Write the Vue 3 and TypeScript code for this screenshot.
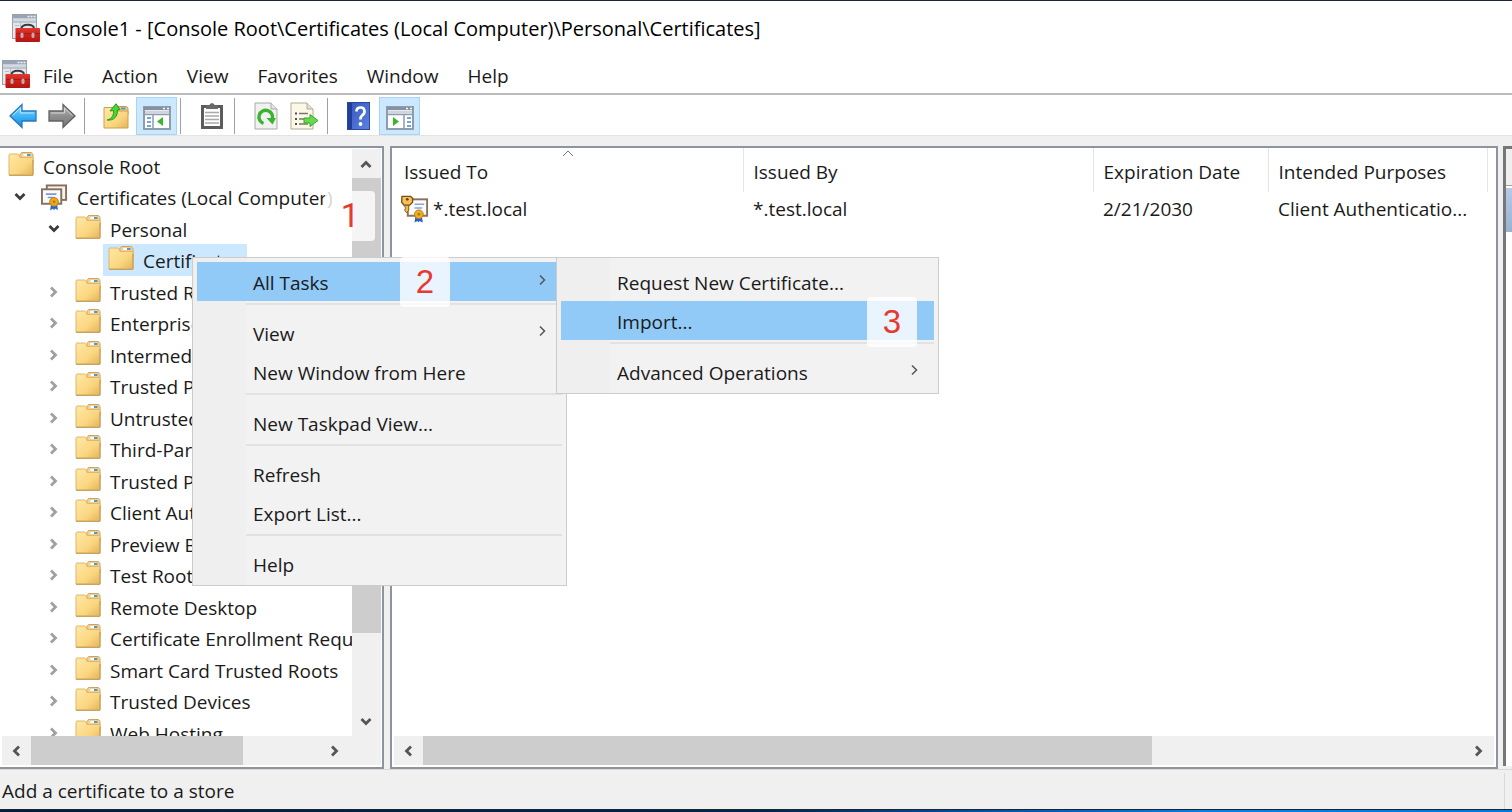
<script setup lang="ts">
interface TreeNode {
  label: string
  level: number
  state?: 'open' | 'closed'
  icon?: string
  selected?: boolean
}

interface MenuEntry {
  label?: string
  separator?: boolean
  submenu?: boolean
  active?: boolean
}

const menus = ['File', 'Action', 'View', 'Favorites', 'Window', 'Help']

const closed = (label: string): TreeNode => ({ label, level: 2, state: 'closed' })

const tree: TreeNode[] = [
  { label: 'Console Root', level: 0 },
  { label: 'Certificates (Local Computer)', level: 1, state: 'open', icon: 'i-certs' },
  { label: 'Personal', level: 2, state: 'open' },
  { label: 'Certificates', level: 3, selected: true },
  closed('Trusted Root Certification Authorities'),
  closed('Enterprise Trust'),
  closed('Intermediate Certification Authorities'),
  closed('Trusted Publishers'),
  closed('Untrusted Certificates'),
  closed('Third-Party Root Certification Authorities'),
  closed('Trusted People'),
  closed('Client Authentication Issuers'),
  closed('Preview Build Roots'),
  closed('Test Roots'),
  closed('Remote Desktop'),
  closed('Certificate Enrollment Requests'),
  closed('Smart Card Trusted Roots'),
  closed('Trusted Devices'),
  closed('Web Hosting'),
]

const columns = ['Issued To', 'Issued By', 'Expiration Date', 'Intended Purposes']

const contextMenu: MenuEntry[] = [
  { label: 'All Tasks', submenu: true, active: true },
  { separator: true },
  { label: 'View', submenu: true },
  { label: 'New Window from Here' },
  { separator: true },
  { label: 'New Taskpad View...' },
  { separator: true },
  { label: 'Refresh' },
  { label: 'Export List...' },
  { separator: true },
  { label: 'Help' },
]

const taskMenu: MenuEntry[] = [
  { label: 'Request New Certificate...' },
  { label: 'Import...', active: true },
  { separator: true },
  { label: 'Advanced Operations', submenu: true },
]

const popups = [
  { name: 'context', entries: contextMenu },
  { name: 'tasks', entries: taskMenu },
]
</script>

<template>
  <div class="window">
    <svg class="defs" width="0" height="0" aria-hidden="true">
      <defs>
        <linearGradient id="g-folder" x1="0" y1="0" x2="1" y2="1">
          <stop offset="0" stop-color="#ffe9a6" />
          <stop offset="0.6" stop-color="#fbd680" />
          <stop offset="1" stop-color="#e3b45c" />
        </linearGradient>
        <linearGradient id="g-blue" x1="0" y1="0" x2="0" y2="1">
          <stop offset="0" stop-color="#8fdcff" />
          <stop offset="0.5" stop-color="#3fb4f5" />
          <stop offset="1" stop-color="#1583dc" />
        </linearGradient>
        <linearGradient id="g-gray" x1="0" y1="0" x2="0" y2="1">
          <stop offset="0" stop-color="#bdbdbd" />
          <stop offset="0.5" stop-color="#8f8f8f" />
          <stop offset="1" stop-color="#747474" />
        </linearGradient>
        <linearGradient id="g-red" x1="0" y1="0" x2="0" y2="1">
          <stop offset="0" stop-color="#dd3a31" />
          <stop offset="0.45" stop-color="#d2211b" />
          <stop offset="1" stop-color="#b31511" />
        </linearGradient>
        <linearGradient id="g-help" x1="0" y1="0" x2="1" y2="1">
          <stop offset="0" stop-color="#3554b8" />
          <stop offset="1" stop-color="#5b83e2" />
        </linearGradient>
      </defs>
      <symbol id="i-console" viewBox="0 0 28 28">
        <rect x="0.5" y="0.5" width="24" height="24" fill="#e3e7ec" stroke="#98a1ac" />
        <rect x="1" y="1" width="23" height="3.500" fill="#98a4b4" />
        <path d="M15.500 2.500h2M18.500 2.500h2M21.500 2.500h2" stroke="#eef2f7" stroke-width="1.500" />
        <rect x="1" y="4.500" width="23" height="3" fill="#d3d8df" />
        <path d="M1 8h23" stroke="#98a4b4" />
        <path d="M3 11.500h4M3 15h2M8.500 8.500v6" stroke="#b2bbc6" />
        <path d="M9.500 14.500C10 9.500 21.500 9.500 22 14.500" fill="none" stroke="#3c3c3c" stroke-width="2" />
        <rect x="3.500" y="14" width="24.500" height="14" rx="1" fill="url(#g-red)" />
        <path d="M4 19.500h24" stroke="#a91a16" />
        <rect x="8.500" y="18.500" width="3" height="5.500" rx="1.500" fill="#b9b0ae" />
        <rect x="19.500" y="18.500" width="3" height="5.500" rx="1.500" fill="#b9b0ae" />
      </symbol>
      <symbol id="i-folder" viewBox="0 0 26 24">
        <path d="M12 4.500V2.500L13.500 0.500H23.500L25 2.500V12H12z" fill="#f0d296" stroke="#cfa45e" />
        <rect x="15.500" y="2" width="3.500" height="2" fill="#fff" />
        <rect x="19" y="2" width="3.500" height="2" fill="#4a9ad8" />
        <path d="M1 3.500Q1 2 2 2H9.500Q11 2 11.500 4L12 5.500H25V23H1z" fill="url(#g-folder)" stroke="#dfb66c" />
        <path d="M1 23.300H25V8" fill="none" stroke="#bd9650" />
      </symbol>
      <symbol id="i-certs" viewBox="0 0 28 27">
        <rect x="6" y="1" width="20" height="15" fill="#f6f3f0" stroke="#86705d" stroke-width="2" />
        <rect x="1" y="5" width="20" height="15" fill="#fbfbff" stroke="#86705d" stroke-width="2" />
        <path d="M5 10h11M7 13.500h6" stroke="#7c97d8" stroke-width="1.600" />
        <path d="M10.500 19l-1 8 3-2 1 2 1-2 3 1.500-1-8z" fill="#1f63d6" />
        <circle cx="13.500" cy="18" r="4.500" fill="#eba91c" stroke="#bd7a0e" />
        <circle cx="13.500" cy="18" r="1.500" fill="#b97a12" />
      </symbol>
      <symbol id="i-keycert" viewBox="0 0 30 28">
        <rect x="7" y="4" width="20" height="17" fill="#fbfbff" stroke="#8a7258" stroke-width="2" />
        <path d="M14 9h10M14 13h8" stroke="#8aa3dd" stroke-width="1.500" />
        <path d="M4 7h4v8l-2 3-2-2v-2l1-1-1-1z" fill="#f1bd4e" stroke="#8f5d11" />
        <path d="M1 1h9l2 2v4l-3 3H3L0.700 7z" fill="#f3c25a" stroke="#7c4e12" stroke-width="1.400" />
        <circle cx="6.500" cy="4" r="1.400" fill="#6d4410" />
        <path d="M15 21l-1 7 3-1.500 1 1.500 1-1.500 3.500 1.500-1-7z" fill="#1f63d6" />
        <circle cx="18.500" cy="19.500" r="4.500" fill="#eeb01f" stroke="#bd7a0e" />
        <circle cx="18.500" cy="19.500" r="1.500" fill="#b97a12" />
      </symbol>
      <symbol id="i-back" viewBox="0 0 28 26">
        <path d="M1 13L13 1.500V8H27V18H13V24.500z" fill="url(#g-blue)" stroke="#2878bd" stroke-width="1.300" />
        <path d="M3.500 12.500L11.500 5V10H25" fill="none" stroke="#b5e8ff" />
      </symbol>
      <symbol id="i-forward" viewBox="0 0 28 26">
        <path d="M27 13L15 1.500V8H1V18H15V24.500z" fill="url(#g-gray)" stroke="#626262" stroke-width="1.300" />
        <path d="M3 10H16.500V5L24.500 12.500" fill="none" stroke="#d5d5d5" />
      </symbol>
      <symbol id="i-up" viewBox="0 0 26 26">
        <path d="M13 5V3.500H23.500L25 5V12H13z" fill="#edc982" stroke="#c99b50" />
        <rect x="18" y="4.500" width="4.500" height="2" fill="#4a9ad8" />
        <path d="M1 4.500H11L13 8H25V25H1z" fill="url(#g-folder)" stroke="#cda04e" />
        <path d="M4 17C9 16 11 12 10.500 7.500L7 8 13 0.700 17 6.500 14.300 7C15 13 11 18 4 17z" fill="#4bd436" stroke="#259b1c" />
      </symbol>
      <symbol id="i-pane-left" viewBox="0 0 28 24">
        <rect x="1" y="1" width="26" height="22" fill="#fff" stroke="#8f9cac" stroke-width="2" />
        <path d="M1 2.500h26" stroke="#8392a5" stroke-width="3" />
        <path d="M20 2.500h2M24 2.500h2" stroke="#fff" stroke-width="1.500" />
        <path d="M2 6h24" stroke="#cfd5dd" stroke-width="3" />
        <path d="M1 8.500h26M10 9v14" stroke="#8f9cac" stroke-width="1.500" />
        <path d="M4 12h4M4 16h4M4 20h4" stroke="#4587d2" stroke-width="1.600" />
        <path d="M14 15.500L20 11V20z" fill="#35b82c" />
      </symbol>
      <symbol id="i-pane-right" viewBox="0 0 28 24">
        <rect x="1" y="1" width="26" height="22" fill="#fff" stroke="#8f9cac" stroke-width="2" />
        <path d="M1 2.500h26" stroke="#8392a5" stroke-width="3" />
        <path d="M20 2.500h2M24 2.500h2" stroke="#fff" stroke-width="1.500" />
        <path d="M2 6h24" stroke="#cfd5dd" stroke-width="3" />
        <path d="M1 8.500h26M18 9v14" stroke="#8f9cac" stroke-width="1.500" />
        <path d="M21 12h4M21 16h4M21 20h4" stroke="#4587d2" stroke-width="1.600" />
        <path d="M13 15.500L7 11V20z" fill="#35b82c" />
      </symbol>
      <symbol id="i-clipboard" viewBox="0 0 22 26">
        <rect x="1.500" y="3.500" width="19" height="21" fill="#fff" stroke="#5c5c5c" stroke-width="3" />
        <path d="M5 6V2.500H8Q9 0 11 0T14 2.500H17V6z" fill="#6a6a6a" />
        <path d="M4 9.500h14M4 13h14M4 16.500h14M4 20h14" stroke="#a9a9a9" stroke-width="1.500" />
      </symbol>
      <symbol id="i-refresh" viewBox="0 0 24 28">
        <path d="M1 1H17L23 7V27H1z" fill="#f1f2f0" stroke="#a9a9a9" />
        <path d="M17 1V7H23" fill="#e3e3e3" stroke="#a9a9a9" />
        <path d="M9.500 21.500A6.800 6.800 0 1 1 18.300 17" fill="none" stroke="#38b42e" stroke-width="3.400" />
        <path d="M12.500 16H22L18.500 22.500z" fill="#38b42e" />
      </symbol>
      <symbol id="i-export" viewBox="0 0 29 28">
        <path d="M1 1H17L23 7V27H1z" fill="#fbf8e6" stroke="#b3aa97" />
        <path d="M17 1V7H23" fill="#e6e1d3" stroke="#aaa" />
        <path d="M5 11.500h2M5 17h2M5 22h2" stroke="#4b4b6a" stroke-width="2" />
        <path d="M9 11.500h9M9 17h6M9 22h9" stroke="#777" stroke-width="1.500" />
        <path d="M14 16H20V12.500L28 18.500 20 24.500V21H14z" fill="#67d94f" stroke="#38a92f" />
      </symbol>
      <symbol id="i-help" viewBox="0 0 23 28">
        <rect x="0.500" y="0.500" width="22" height="27" fill="url(#g-help)" stroke="#2846a3" />
        <rect x="1" y="1" width="4" height="26" fill="#203d9b" />
        <path d="M9.500 9.500Q9.500 5.500 13.500 5.500T17.500 9.500Q17.500 12 15 13.500Q13.500 14.700 13.500 17.500" fill="none" stroke="#fff" stroke-width="2.700" />
        <circle cx="13.500" cy="22" r="1.900" fill="#fff" />
      </symbol>
      <symbol id="i-chevron" viewBox="0 0 14 14">
        <path d="M4 2.500L8.500 7L4 11.500" fill="none" stroke="currentColor" stroke-width="2.800" />
      </symbol>
      <symbol id="i-thin" viewBox="0 0 14 14">
        <path d="M5 2.500L9.500 7L5 11.500" fill="none" stroke="currentColor" stroke-width="1.500" />
      </symbol>
    </svg>

    <header class="title-bar">
      <svg class="app-icon"><use href="#i-console" /></svg>
      <h1 class="title">Console1 - [Console Root\Certificates (Local Computer)\Personal\Certificates]</h1>
    </header>

    <nav class="menu-bar">
      <svg class="app-icon"><use href="#i-console" /></svg>
      <button v-for="m in menus" :key="m" type="button" class="menu-title">{{ m }}</button>
    </nav>

    <div class="toolbar">
      <button type="button" class="tool" aria-label="Back"><svg width="28" height="26"><use href="#i-back" /></svg></button>
      <button type="button" class="tool" aria-label="Forward"><svg width="28" height="26"><use href="#i-forward" /></svg></button>
      <span class="divider"></span>
      <button type="button" class="tool" aria-label="Up one level"><svg width="26" height="26"><use href="#i-up" /></svg></button>
      <button type="button" class="tool pressed" aria-label="Console tree"><svg width="28" height="24"><use href="#i-pane-left" /></svg></button>
      <span class="divider"></span>
      <button type="button" class="tool" aria-label="Paste"><svg width="22" height="26"><use href="#i-clipboard" /></svg></button>
      <span class="divider"></span>
      <button type="button" class="tool" aria-label="Refresh"><svg width="24" height="28"><use href="#i-refresh" /></svg></button>
      <button type="button" class="tool" aria-label="Export list"><svg width="29" height="28"><use href="#i-export" /></svg></button>
      <span class="divider"></span>
      <button type="button" class="tool" aria-label="Help"><svg width="23" height="28"><use href="#i-help" /></svg></button>
      <button type="button" class="tool pressed" aria-label="Action pane"><svg width="28" height="24"><use href="#i-pane-right" /></svg></button>
    </div>

    <main class="workspace">
      <section class="pane tree-pane">
        <div class="tree-area">
          <ul class="tree">
            <li v-for="(n, i) in tree" :key="i" class="row" :class="'level-' + n.level">
              <button v-if="n.state" type="button" class="expander" :class="n.state" :aria-label="'Toggle ' + n.label">
                <svg width="14" height="14"><use href="#i-chevron" /></svg>
              </button>
              <button type="button" class="node" :class="{ selected: n.selected }">
                <svg v-if="n.icon" width="27" height="27"><use :href="'#' + n.icon" /></svg>
                <svg v-else class="folder" width="26" height="24"><use href="#i-folder" /></svg>
                <span>{{ n.label }}</span>
              </button>
            </li>
          </ul>
          <div class="scroll vertical">
            <button type="button" class="arrow up" aria-label="Scroll up"><svg width="14" height="14"><use href="#i-chevron" /></svg></button>
            <div class="track"><div class="thumb thumb-tree-y"></div></div>
            <button type="button" class="arrow down" aria-label="Scroll down"><svg width="14" height="14"><use href="#i-chevron" /></svg></button>
          </div>
        </div>
        <div class="scroll horizontal tree-x">
          <button type="button" class="arrow left" aria-label="Scroll left"><svg width="14" height="14"><use href="#i-chevron" /></svg></button>
          <div class="track"><div class="thumb thumb-tree-x"></div></div>
          <button type="button" class="arrow" aria-label="Scroll right"><svg width="14" height="14"><use href="#i-chevron" /></svg></button>
        </div>
      </section>

      <section class="pane list-pane">
        <div class="list-area">
          <table class="list">
            <colgroup>
              <col class="col-first" /><col class="col-wide" /><col class="col-date" /><col class="col-purpose" /><col />
            </colgroup>
            <thead>
              <tr>
                <th v-for="(c, i) in columns" :key="c" scope="col">
                  <svg v-if="i === 0" class="sort" viewBox="0 0 12 7"><path d="M1 6L6 1L11 6" fill="none" stroke="#777" /></svg>
                  {{ c }}
                </th>
                <td></td>
              </tr>
            </thead>
            <tbody>
              <tr>
                <td class="subject">
                  <div class="subject-line"><svg width="29" height="28"><use href="#i-keycert" /></svg><span>*.test.local</span></div>
                </td>
                <td>*.test.local</td>
                <td>2/21/2030</td>
                <td>Client Authenticatio...</td>
                <td></td>
              </tr>
            </tbody>
          </table>
        </div>
        <div class="scroll horizontal">
          <button type="button" class="arrow left" aria-label="Scroll left"><svg width="14" height="14"><use href="#i-chevron" /></svg></button>
          <div class="track"><div class="thumb thumb-list-x"></div></div>
          <button type="button" class="arrow" aria-label="Scroll right"><svg width="14" height="14"><use href="#i-chevron" /></svg></button>
        </div>
      </section>

      <aside class="actions-pane">
        <div class="actions-head"></div>
        <div class="actions-group"></div>
      </aside>
    </main>

    <footer class="status"><span>Add a certificate to a store</span><i class="status-split"></i></footer>
    <div class="desktop-edge"></div>

    <menu v-for="p in popups" :key="p.name" class="popup" :class="p.name">
      <li v-for="(e, i) in p.entries" :key="i" :class="{ line: e.separator }">
        <button v-if="!e.separator" type="button" class="item" :class="{ active: e.active }">
          <span>{{ e.label }}</span>
          <svg v-if="e.submenu" width="14" height="14"><use href="#i-thin" /></svg>
        </button>
      </li>
    </menu>

    <span class="step step-1">1</span>
    <span class="step step-2">2</span>
    <span class="step step-3">3</span>
  </div>
</template>

<style>
body {
  background: #f0f0f0;
}
</style>

<style scoped>
.window {
  position: relative;
  display: flex;
  flex-direction: column;
  height: 100vh;
  box-sizing: border-box;
  overflow: hidden;
  border-top: 1px solid #1b2536;
  background: #f0f0f0;
  color: #1a1a1a;
  font-family: "Open Sans", "Noto Sans", sans-serif;
  font-size: 19px;
  line-height: 28px;
  white-space: nowrap;
}
.window * {
  box-sizing: border-box;
}
.defs {
  position: absolute;
}
button {
  margin: 0;
  padding: 0;
  border: 0;
  background: none;
  color: inherit;
  font: inherit;
  text-align: left;
}
svg {
  display: block;
  flex: none;
}
.app-icon {
  width: 28px;
  height: 28px;
}
.title-bar {
  display: flex;
  align-items: center;
  gap: 4px;
  height: 54px;
  padding-left: 12px;
  background: #fff;
  color: #000;
}
.title {
  margin: 0;
  padding-top: 1px;
  font-size: 20px;
  font-weight: 400;
}
.menu-bar {
  display: flex;
  align-items: center;
  gap: 29px;
  height: 40px;
  padding-left: 2px;
  background: #fff;
  border-bottom: 2px solid #bcbcbc;
}
.menu-bar .app-icon {
  margin-right: -16px;
}
.menu-title {
  padding-top: 4px;
}
.toolbar {
  display: flex;
  align-items: center;
  height: 41px;
  padding: 2px 0 0 3px;
  background: #fff;
  border-bottom: 1px solid #e3e3e3;
}
.tool {
  display: flex;
  align-items: center;
  justify-content: center;
  width: 39px;
  height: 38px;
}
.tool.pressed {
  width: 41px;
  margin-left: 1px;
  padding-top: 4px;
  background: #cce8ff;
  border: 1px solid #a5d5fa;
}
.divider {
  width: 1px;
  height: 36px;
  margin: 0 11px 0 3px;
  background: #a0a0a0;
}
.workspace {
  display: flex;
  flex: 1;
  min-height: 0;
  padding-top: 10px;
}
.pane {
  display: flex;
  flex-direction: column;
  min-width: 0;
  border: 2px solid #8e949e;
  background: #fff;
}
.tree-pane {
  flex: none;
  width: 384px;
  border-left: 0;
  margin-right: 6px;
  padding: 1px 1px 2px 2px;
}
.list-pane {
  flex: 1;
  margin-right: 5px;
  padding: 0 2px 2px;
}
.tree-area {
  display: flex;
  flex: 1;
  min-height: 0;
}
.tree {
  flex: 1;
  min-width: 0;
  margin: 0;
  padding: 1px 0 0;
  overflow: hidden;
  list-style: none;
}
.row {
  display: flex;
  height: 31px;
}
.row:nth-child(even) {
  height: 32px;
}
.level-0 {
  padding-left: 1px;
}
.level-1 {
  padding-left: 1px;
}
.level-2 {
  padding-left: 35px;
}
.level-3 {
  padding-left: 101px;
}
.expander {
  display: flex;
  flex: none;
  align-items: center;
  width: 33px;
  padding-left: 10px;
  color: #a0a0a0;
}
.expander.open {
  color: #3b3b3b;
}
.expander.open svg {
  transform: rotate(90deg);
}
.node {
  display: flex;
  align-items: center;
  gap: 9px;
  padding: 0 5px;
}
.node span {
  padding-top: 2px;
}
.node.selected {
  background: #cce8ff;
}
.folder {
  margin-bottom: 4px;
}
.scroll {
  display: flex;
  flex: none;
  background: #f0f0f0;
}
.scroll.vertical {
  flex-direction: column;
  width: 29px;
}
.scroll.horizontal {
  height: 29px;
}
.tree-x {
  padding-right: 31px;
}
.arrow {
  display: flex;
  flex: none;
  align-items: center;
  justify-content: center;
  width: 29px;
  height: 29px;
  padding-right: 2px;
  color: #555;
}
.arrow.left svg {
  transform: rotate(180deg);
}
.arrow.up svg {
  transform: rotate(270deg);
}
.arrow.down svg {
  transform: rotate(90deg);
}
.track {
  flex: 1;
}
.thumb {
  height: 100%;
  background: #cdcdcd;
}
.thumb-tree-y {
  height: 86%;
}
.thumb-tree-x {
  width: 73%;
}
.thumb-list-x {
  width: 70%;
}
.list-area {
  flex: 1;
  min-height: 0;
  overflow: hidden;
}
.list {
  width: 100%;
  border-collapse: collapse;
  table-layout: fixed;
}
.col-first {
  width: 349px;
}
.col-wide {
  width: 350px;
}
.col-date {
  width: 175px;
}
.col-purpose {
  width: 219px;
}
th {
  position: relative;
  height: 44px;
  padding: 4px 0 0 10px;
  border-right: 1px solid #e5e5e5;
  font-weight: 400;
  text-align: left;
}
.sort {
  position: absolute;
  top: 2px;
  left: 50%;
  width: 12px;
  height: 7px;
  margin-left: -6px;
}
td {
  height: 34px;
  padding: 0 0 0 10px;
}
.list .subject {
  padding-left: 7px;
}
.subject-line {
  display: flex;
  align-items: center;
  gap: 3px;
}
.actions-pane {
  flex: none;
  width: 9px;
  margin-bottom: 3px;
  border-top: 3px solid #777;
  border-left: 3px solid #777;
  background: #fff;
}
.actions-head {
  height: 37px;
  background: #f0f0f0;
  border-bottom: 1px solid #a0a0a0;
}
.actions-group {
  height: 44px;
  margin-top: 2px;
  background: linear-gradient(#b6cbe6, #98b2d3);
}
.status {
  display: flex;
  justify-content: space-between;
  align-items: center;
  height: 40px;
  padding: 2px 7px 0 2px;
  border-top: 1px solid #d9d9d9;
}
.status-split {
  width: 1px;
  height: 36px;
  background: #d9d9d9;
}
.desktop-edge {
  height: 3px;
  border-top: 1px solid #1c2633;
  background: linear-gradient(90deg, #001d3d, #01244a 50%, #0450a0 65%, #0a7fe0 80%, #0078d7);
}
.popup {
  position: absolute;
  top: 256px;
  margin: 0;
  padding: 4px 4px 2px;
  border: 1px solid #ccc;
  background: linear-gradient(90deg, #efefef 53px, #f2f2f2 53px);
  list-style: none;
}
.context {
  left: 192px;
  width: 375px;
}
.tasks {
  left: 556px;
  width: 383px;
}
.item {
  display: flex;
  align-items: center;
  justify-content: space-between;
  width: 100%;
  height: 39px;
  padding: 2px 13px 0 56px;
}
.item svg {
  margin-bottom: 6px;
  color: #555;
}
.item.active {
  background: #91c9f7;
}
.line {
  height: 12px;
  padding: 2px 0 0 49px;
}
.line::before {
  content: "";
  display: block;
  height: 2px;
  background: #e2e2e2;
}
.step {
  position: absolute;
  width: 50px;
  height: 50px;
  border-radius: 4px;
  background: rgba(255, 255, 255, 0.8);
  color: #e63a30;
  font-family: "Liberation Sans", sans-serif;
  font-size: 33px;
  line-height: 50px;
  text-align: center;
}
.step-1 {
  left: 325px;
  top: 190px;
  font-family: Roboto, "Liberation Sans", sans-serif;
}
.step-2 {
  left: 400px;
  top: 256px;
}
.step-3 {
  left: 867px;
  top: 296px;
}
</style>
